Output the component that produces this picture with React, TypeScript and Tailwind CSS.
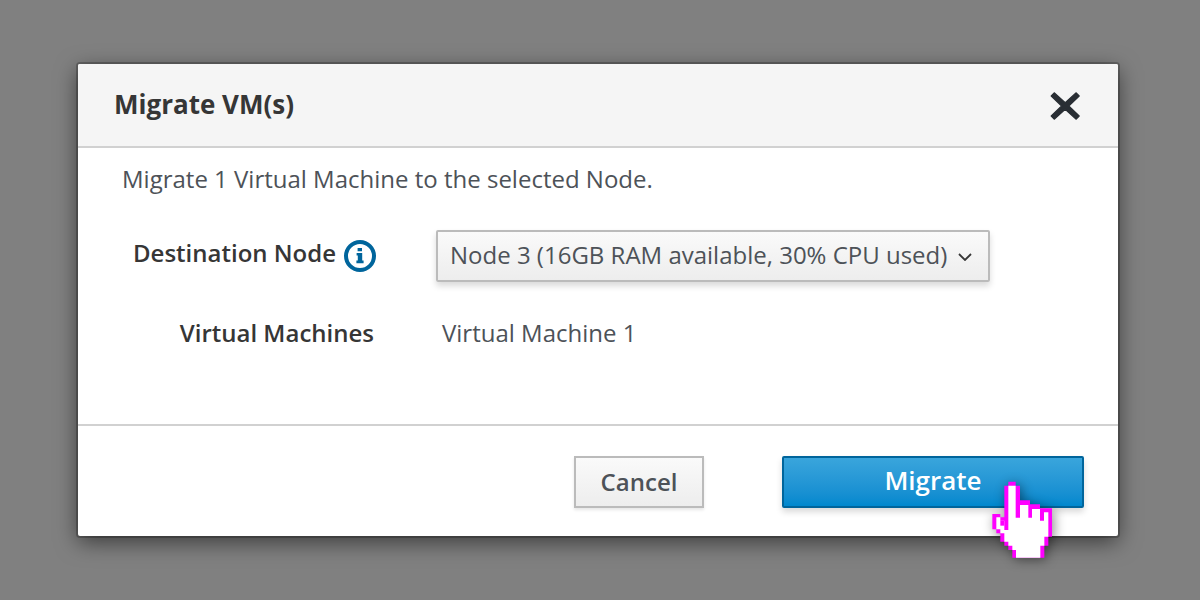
import { useState } from "react";

function CloseIcon() {
  return (
    <svg viewBox="0 0 30 28" className="h-7 w-[30px]" aria-hidden="true">
      <path
        d="M4.2 0.8 L15.2 10.6 L26.2 0.8 L29.2 4 L18.8 14 L29.2 24 L26.2 27.2 L15.2 17.4 L4.2 27.2 L1.2 24 L11.6 14 L1.2 4 Z"
        fill="#292e34"
        stroke="#292e34"
        strokeWidth="1.2"
        strokeLinejoin="round"
      />
    </svg>
  );
}

function InfoIcon() {
  return (
    <svg viewBox="0 0 32 32" className="size-8" aria-hidden="true">
      <circle cx="16" cy="16" r="14" fill="none" stroke="#00659c" strokeWidth="4" />
      <path
        d="M13.6 8h4.4v3.2h-4.4zM12.6 13h5.6v7.6h1.4v2.6h-7.2v-2.6h1.4v-5h-1.2z"
        fill="#00659c"
      />
    </svg>
  );
}

function HandPointer() {
  return (
    <svg
      viewBox="0 0 225 270"
      className="h-[90px] w-[75px] drop-shadow-[2px_2px_6px_rgba(0,0,0,0.45)]"
      aria-hidden="true"
    >
      <path
        d="M70 20H92V32H105V76H135V88H165V100H201V185H190V212H178V248H82V225H70V212H58V200H46V175H34V163H22V117H46V127H58V32H70Z"
        fill="#ff00ff"
      />
      <path
        d="M70 32H92V128H105V90H130V128H141V102H165V137H177V112H190V185H178V212H166V248H93V225H82V212H70V200H58V175H46V163H34V127H46V137H58V165H70Z"
        fill="#ffffff"
      />
      <path d="M46 137H58V152H46Z" fill="#ff00ff" />
    </svg>
  );
}

export default function App() {
  const [node, setNode] = useState("node3");

  return (
    <main className="min-h-screen bg-[#808080] pt-16 pr-[82px] pb-16 pl-[78px] font-['Open_Sans',sans-serif] text-2xl text-[#4d5258]">
      <section
        role="dialog"
        aria-labelledby="dialog-title"
        className="rounded-xs bg-white shadow-[0_0_0_2px_rgba(0,0,0,0.22),0_6px_22px_rgba(0,0,0,0.55)]"
      >
        <header className="flex items-center justify-between rounded-t-xs border-b-2 border-[#d1d1d1] bg-[#f5f5f5] py-6 pr-[38px] pl-9">
          <h1 id="dialog-title" className="pb-0.5 text-[26px] leading-8 font-bold text-[#363636]">
            Migrate VM(s)
          </h1>
          <button type="button" aria-label="Close" className="pt-0.5">
            <CloseIcon />
          </button>
        </header>

        <div className="px-11 pt-[15px] pb-[75px]">
          <p className="leading-8">Migrate 1 Virtual Machine to the selected Node.</p>

          <div className="mt-[35px] grid grid-cols-[254px_1fr] items-center gap-x-[60px] gap-y-[35px]">
            <div className="flex items-center justify-end gap-2">
              <label htmlFor="destination" className="pb-1.5 leading-8 font-semibold text-[#363636]">
                Destination Node
              </label>
              <button type="button" aria-label="About destination nodes">
                <InfoIcon />
              </button>
            </div>
            <div className="relative justify-self-start">
              <select
                id="destination"
                value={node}
                onChange={(event) => setNode(event.target.value)}
                className="h-[52px] w-[554px] appearance-none rounded-xs border-2 border-[#bbbbbb] bg-linear-to-b from-[#fafafa] to-[#ededed] pr-9 pb-0.5 pl-3 shadow-[0_4px_6px_rgba(3,3,3,0.15)]"
              >
                <option value="node3">Node 3 (16GB RAM available, 30% CPU used)</option>
              </select>
              <svg
                viewBox="0 0 14 8"
                className="pointer-events-none absolute top-[23px] right-[18px] h-2 w-3.5"
                aria-hidden="true"
              >
                <path d="M1 1L7 7L13 1" fill="none" stroke="#363636" strokeWidth="1.8" />
              </svg>
            </div>

            <h2 className="pr-0.5 text-right leading-8 font-semibold text-[#363636]">
              Virtual Machines
            </h2>
            <p className="pl-1.5 leading-8">Virtual Machine 1</p>
          </div>
        </div>

        <footer className="flex justify-end gap-[78px] border-t-2 border-[#d1d1d1] pt-[30px] pr-[34px] pb-7">
          <button
            type="button"
            className="h-[52px] w-[130px] border-2 border-[#bbbbbb] bg-linear-to-b from-[#fafafa] to-[#ededed] font-semibold shadow-[0_2px_3px_rgba(3,3,3,0.1)]"
          >
            Cancel
          </button>
          <div className="relative">
            <button
              type="button"
              className="h-[52px] w-[302px] rounded-xs border-2 border-[#00659c] bg-linear-to-b from-[#39a5dc] to-[#0088ce] pb-1 text-[26px] font-semibold text-white shadow-[0_4px_6px_rgba(3,3,3,0.15)]"
            >
              Migrate
            </button>
            <div className="pointer-events-none absolute top-[19px] right-6">
              <HandPointer />
            </div>
          </div>
        </footer>
      </section>
    </main>
  );
}
